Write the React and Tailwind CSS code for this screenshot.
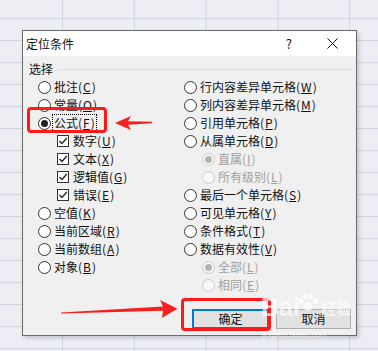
import React from "react";

const F = { fontFamily: '"Noto Sans CJK SC", "Microsoft YaHei", sans-serif' };

function Radio({ checked, disabled }) {
  return (
    <span
      className={`w-[13px] h-[13px] rounded-full border flex items-center justify-center shrink-0 ${
        disabled ? "border-[#cccccc] bg-[#f7f7f7]" : "border-[#333333] bg-white"
      }`}
    >
      {checked && (
        <span className={`w-[7px] h-[7px] rounded-full ${disabled ? "bg-[#b4b4b4]" : "bg-[#222222]"}`} />
      )}
    </span>
  );
}

function Check() {
  return (
    <span className="w-[12px] h-[12px] border border-[#333333] bg-white flex items-center justify-center shrink-0">
      <svg width="10" height="10" viewBox="0 0 10 10">
        <path d="M1.5 5 L4 7.5 L8.8 2" fill="none" stroke="#222" strokeWidth="1.3" />
      </svg>
    </span>
  );
}

function Label({ text, k, disabled, focus }) {
  return (
    <span
      className={`leading-[16px] text-[12px] whitespace-nowrap ${disabled ? "text-[#a0a0a0]" : "text-[#111]"} ${
        focus ? "outline outline-1 outline-dotted outline-black outline-offset-[0px] px-[1px] -ml-[1px]" : ""
      }`}
    >
      {text}(<span className="underline px-[1px]">{k}</span>)
    </span>
  );
}

function RRow({ text, k, checked, disabled, indent, focus }) {
  return (
    <div className={`h-[18px] flex items-center gap-[3px] ${indent ? "pl-[18px]" : ""}`}>
      <Radio checked={checked} disabled={disabled} />
      <Label text={text} k={k} disabled={disabled} focus={focus} />
    </div>
  );
}

function CRow({ text, k }) {
  return (
    <div className="h-[18px] flex items-center gap-[4px] pl-[19px]">
      <Check />
      <Label text={text} k={k} />
    </div>
  );
}

export default function App() {
  return (
    <div
      className="relative w-[378px] h-[351px] overflow-hidden bg-[#eceef4] bg-[linear-gradient(to_right,#d0d5e0_1px,transparent_1px),linear-gradient(to_bottom,#d0d5e0_1px,transparent_1px)] bg-[size:71.8px_22px] bg-[position:62px_18px] pt-[30px] pl-[22px]"
      style={F}
    >
      <div className="w-[335px] h-[306px] border border-[#6a6a6a] flex flex-col shadow-[2px_2px_4px_rgba(0,0,0,0.18)]">
        <div className="h-[25px] bg-white flex items-center pl-[3px] shrink-0">
          <span className="text-[12px] text-[#111] leading-[16px]">定位条件</span>
          <span className="ml-auto text-[13px] text-[#111] leading-[16px] mr-[35px]">?</span>
          <svg width="11" height="11" viewBox="0 0 11 11" className="mr-[18px]">
            <path d="M0.5 0.5 L10.5 10.5 M10.5 0.5 L0.5 10.5" stroke="#111" strokeWidth="1" />
          </svg>
        </div>
        <div className="flex-1 bg-[#f0f0f0] flex flex-col">
          <div className="h-[18px] mt-[4px] flex items-center pl-[6px] pr-[5px]">
            <span className="text-[12px] text-[#111] leading-[16px]">选择</span>
            <span className="flex-1 h-px bg-[#dcdcdc] ml-[5px]" />
          </div>
          <div className="flex">
            <div className="w-[161px] pl-[15px] flex flex-col">
              <RRow text="批注" k="C" />
              <RRow text="常量" k="O" />
              <RRow text="公式" k="F" checked focus />
              <CRow text="数字" k="U" />
              <CRow text="文本" k="X" />
              <CRow text="逻辑值" k="G" />
              <CRow text="错误" k="E" />
              <RRow text="空值" k="K" />
              <RRow text="当前区域" k="R" />
              <RRow text="当前数组" k="A" />
              <RRow text="对象" k="B" />
            </div>
            <div className="flex flex-col">
              <RRow text="行内容差异单元格" k="W" />
              <RRow text="列内容差异单元格" k="M" />
              <RRow text="引用单元格" k="P" />
              <RRow text="从属单元格" k="D" />
              <RRow text="直属" k="I" checked disabled indent />
              <RRow text="所有级别" k="L" disabled indent />
              <RRow text="最后一个单元格" k="S" />
              <RRow text="可见单元格" k="Y" />
              <RRow text="条件格式" k="T" />
              <RRow text="数据有效性" k="V" />
              <RRow text="全部" k="L" checked disabled indent />
              <RRow text="相同" k="E" disabled indent />
            </div>
          </div>
          <div className="flex justify-end gap-[7px] mt-[15px] pr-[5px]">
            <button className="w-[77px] h-[20px] border-2 border-[#0078d7] bg-[#e1e1e1] text-[12px] text-[#111] leading-[16px] flex items-center justify-center">
              确定
            </button>
            <button className="w-[75px] h-[20px] border border-[#adadad] bg-[#e1e1e1] text-[12px] text-[#111] leading-[16px] flex items-center justify-center">
              取消
            </button>
          </div>
        </div>
      </div>

      {/* annotation boxes */}
      <div className="absolute left-[27px] top-[107px] w-[80px] h-[26px] border-[3px] border-[#ff1a1a] rounded-[4px]" />
      <div className="absolute left-[181px] top-[298px] w-[90px] h-[33px] border-[3px] border-[#ff1a1a] rounded-[4px]" />

      {/* watermark */}
      <div className="absolute left-[261px] top-[292px] flex items-end text-white/70 pointer-events-none">
        <span className="text-[25px] font-bold leading-[27px]" style={{ fontFamily: "Arial, sans-serif" }}>
          Bai
        </span>
        <svg width="24" height="20" viewBox="0 0 24 20" className="-ml-[4px] mb-[9px]">
          <g fill="rgba(255,255,255,0.7)">
            <ellipse cx="5" cy="9" rx="2.5" ry="3" />
            <ellipse cx="9.5" cy="4" rx="2.5" ry="3" />
            <ellipse cx="15" cy="4" rx="2.5" ry="3" />
            <ellipse cx="19.5" cy="9" rx="2.5" ry="3" />
            <ellipse cx="12" cy="14.5" rx="5" ry="4" />
          </g>
        </svg>
        <span className="text-[15px] font-bold leading-[20px] ml-[1px] mb-[3px]">经验</span>
      </div>
      <div className="absolute left-[262px] top-[330px] text-[8px] leading-[9px] text-white/70" style={{ fontFamily: "Arial, sans-serif" }}>
        jingyan.baidu.com
      </div>

      {/* arrows */}
      <svg className="absolute left-0 top-0 pointer-events-none" width="378" height="351" viewBox="0 0 378 351">
        <polygon points="115,123 131,116 128,121.3 152,121.8 152,123.2 128,124.7 131,130" fill="#f52020" />
        <polygon points="61,312.6 163,306.5 160,300 177.5,308.8 162,317.8 163,310.7 61,313.6" fill="#f52020" />
      </svg>
    </div>
  );
}
